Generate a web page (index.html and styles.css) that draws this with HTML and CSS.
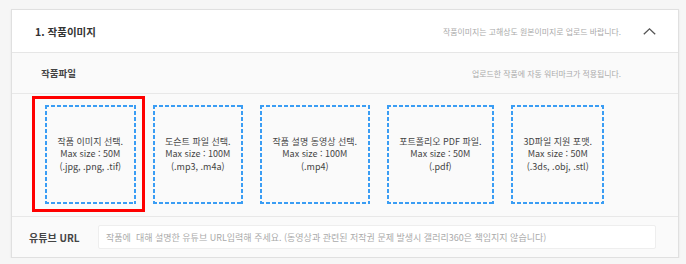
FILE: index.html
```html
<!DOCTYPE html>
<html lang="ko">
<head>
    <meta charset="UTF-8">
    <meta name="viewport" content="width=device-width, initial-scale=1.0">
    <title>작품 등록</title>
    <link rel="stylesheet" href="styles.css">
</head>
<body>

    <div class="wrap">
        <div class="card">
            <div class="card-head">
                <h2 class="card-title">1. 작품이미지</h2>
                <span class="hint">작품이미지는 고해상도 원본이미지로 업로드 바랍니다.</span>
                <svg class="toggle" width="13" height="7" viewBox="0 0 13 7">
                    <polyline points="0.8,6.3 6.5,0.9 12.2,6.3" fill="none" stroke="#555" stroke-width="1.3"/>
                </svg>
            </div>

            <div class="sec-head">
                <h3 class="sec-title">작품파일</h3>
                <span class="hint">업로드한 작품에 자동 워터마크가 적용됩니다.</span>
            </div>

            <div class="files">
                <div class="file-item is-marked">
                    <p>작품 이미지 선택.</p>
                    <p>Max size : 50M</p>
                    <p>(.jpg, .png, .tif)</p>
                </div>
                <div class="file-item">
                    <p>도슨트 파일 선택.</p>
                    <p>Max size : 100M</p>
                    <p>(.mp3, .m4a)</p>
                </div>
                <div class="file-item">
                    <p>작품 설명 동영상 선택.</p>
                    <p>Max size : 100M</p>
                    <p>(.mp4)</p>
                </div>
                <div class="file-item">
                    <p>포트폴리오 PDF 파일.</p>
                    <p>Max size : 50M</p>
                    <p>(.pdf)</p>
                </div>
                <div class="file-item">
                    <p>3D파일 지원 포맷.</p>
                    <p>Max size : 50M</p>
                    <p>(.3ds, .obj, .stl)</p>
                </div>
            </div>

            <div class="yt-row">
                <label class="yt-label" for="ytUrl">유튜브 URL</label>
                <input type="text" id="ytUrl" class="yt-input" placeholder="작품에  대해 설명한 유튜브 URL입력해 주세요. (동영상과 관련된 저작권 문제 발생시 갤러리360은 책임지지 않습니다)">
            </div>
        </div>
    </div>

</body>
</html>
```

FILE: styles.css
```css
body {
    margin: 0;
    background-color: #f6f6f6;
    font-family: "Noto Sans CJK KR", "Noto Sans", sans-serif;
    color: #333;
}
.wrap {
    padding: 9px 7px 0 11px;
}
.card {
    background: #fafafa;
    border: 1px solid #e0e0e0;
    box-shadow: 0px 1px 2px rgba(0, 0, 0, 0.08);
}
.card-head {
    height: 42px;
    display: flex;
    align-items: center;
    padding: 0 22px 0 23px;
    background: #fff;
    border-bottom: 1px solid #e6e6e6;
}
.card-title {
    margin: 0;
    flex: 1;
    font-size: 10.5px;
    font-weight: bold;
    color: #333;
}
.hint {
    font-size: 7.9px;
    color: #aaa;
}
.toggle {
    margin-left: 22px;
}
.sec-head {
    height: 40px;
    display: flex;
    align-items: center;
    padding: 0 57px 0 29px;
    border-bottom: 1px solid #e8e8e8;
}
.sec-title {
    margin: 0;
    flex: 1;
    font-size: 9.5px;
    font-weight: bold;
    color: #444;
}
.files {
    display: flex;
    gap: 17px;
    padding: 11px 0 12px 33px;
    border-bottom: 1px solid #e8e8e8;
}
/* dashed frame drawn with gradients: short 4px dashes, 2px gaps */
.file-item {
    position: relative;
    height: 99px;
    box-sizing: border-box;
    display: flex;
    flex-direction: column;
    justify-content: center;
    padding: 0 12.5px;
    text-align: center;
    background:
        repeating-linear-gradient(90deg, #3a9df4 0 4px, transparent 4px 6px) top / 100% 2px no-repeat,
        repeating-linear-gradient(90deg, #3a9df4 0 4px, transparent 4px 6px) bottom / 100% 2px no-repeat,
        repeating-linear-gradient(180deg, #3a9df4 0 4px, transparent 4px 6px) left / 2px 100% no-repeat,
        repeating-linear-gradient(180deg, #3a9df4 0 4px, transparent 4px 6px) right / 2px 100% no-repeat;
}
.file-item p {
    margin: 0;
    font-size: 9px;
    line-height: 12.5px;
    color: #444;
}
.file-item.is-marked::after {
    content: "";
    position: absolute;
    left: -13px;
    right: -9px;
    top: -9px;
    bottom: -8px;
    border: 3px solid #f00;
}
.yt-row {
    height: 40px;
    display: flex;
    align-items: center;
    padding: 0 22px 0 17px;
}
.yt-label {
    width: 69px;
    font-size: 10px;
    font-weight: bold;
    color: #444;
}
.yt-input {
    flex: 1;
    height: 24px;
    box-sizing: border-box;
    padding: 0 7px;
    border: 1px solid #eee;
    border-radius: 2px;
    background: #fff;
    font-family: "Noto Sans CJK KR", "Noto Sans", sans-serif;
    font-size: 9px;
}
.yt-input::placeholder {
    color: #aaa;
}
```
